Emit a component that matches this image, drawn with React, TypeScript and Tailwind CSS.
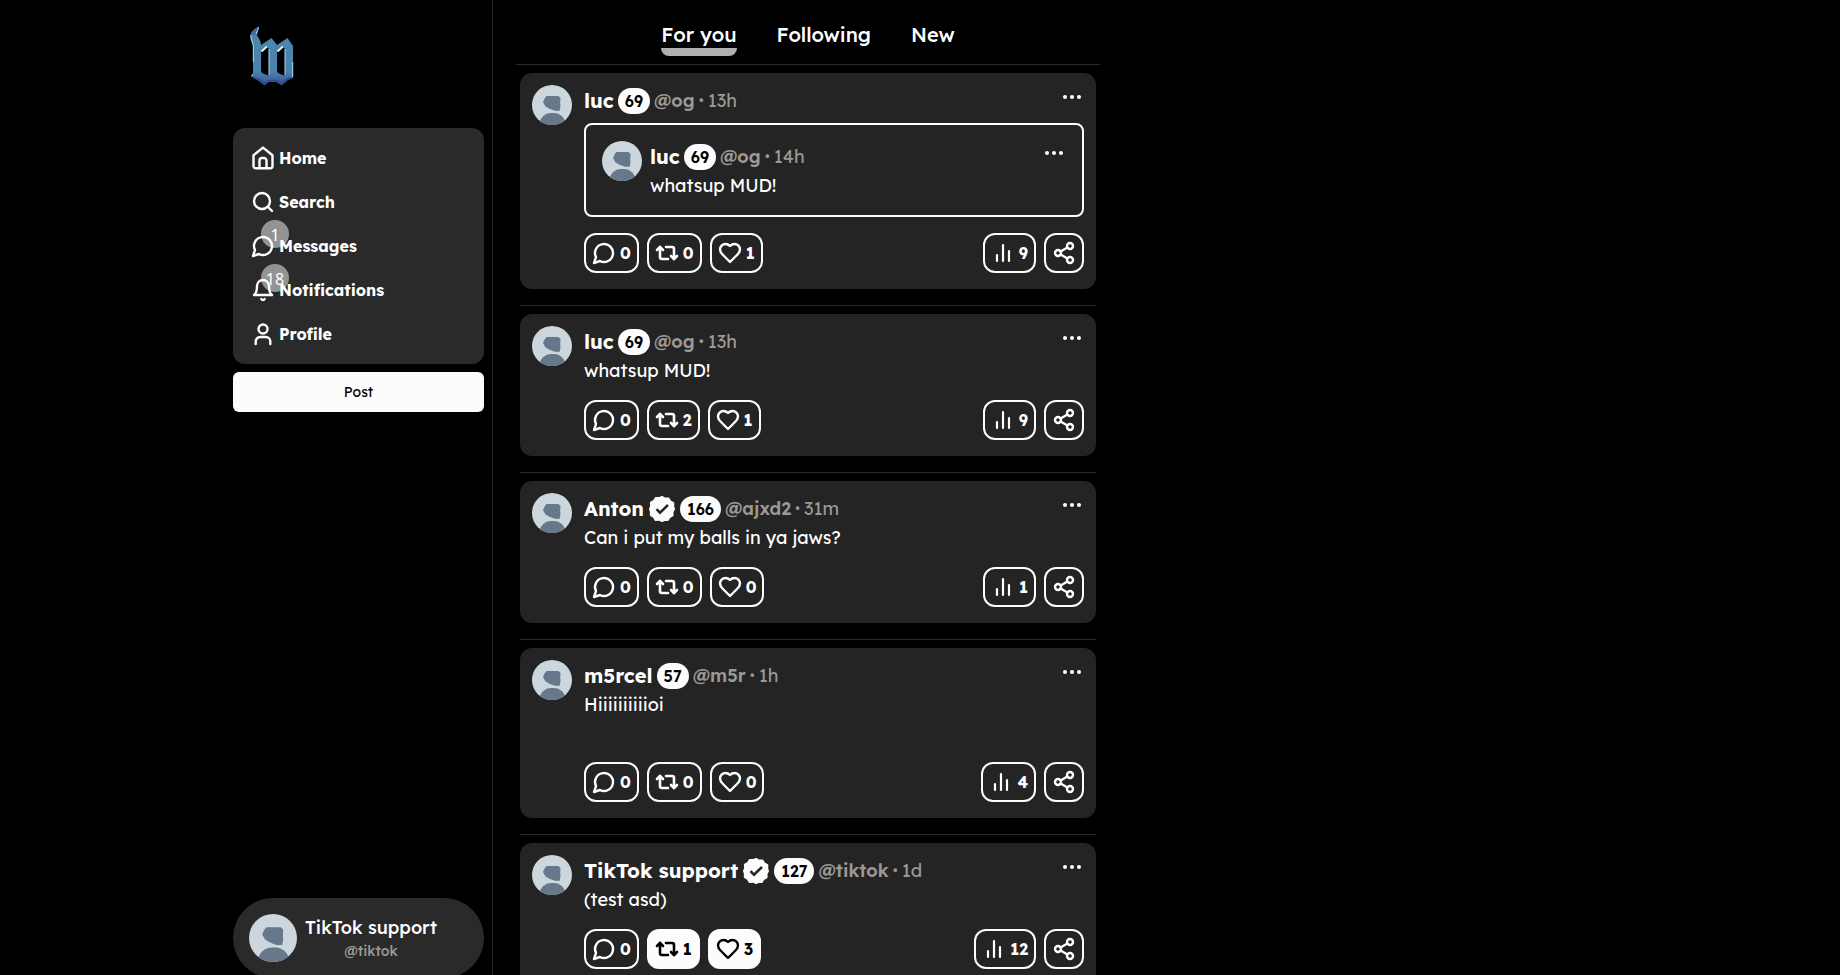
import React from 'react';
import { Search, Repeat2, Share2 } from 'lucide-react';

interface PostData {
  id: number;
  name: string;
  handle: string;
  level: number;
  age: string;
  text?: string;
  verified?: boolean;
  trailingLine?: boolean;
  quote?: PostData;
  comments?: number;
  reposts?: number;
  likes?: number;
  views?: number;
  reposted?: boolean;
  liked?: boolean;
}

const posts: PostData[] = [
  {
    id: 1, name: 'luc', handle: '@og', level: 69, age: '13h', comments: 0, reposts: 0, likes: 1, views: 9,
    quote: { id: 2, name: 'luc', handle: '@og', level: 69, age: '14h', text: 'whatsup MUD!' },
  },
  { id: 2, name: 'luc', handle: '@og', level: 69, age: '13h', text: 'whatsup MUD!', comments: 0, reposts: 2, likes: 1, views: 9 },
  { id: 3, name: 'Anton', handle: '@ajxd2', level: 166, age: '31m', verified: true, text: 'Can i put my balls in ya jaws?', comments: 0, reposts: 0, likes: 0, views: 1 },
  { id: 4, name: 'm5rcel', handle: '@m5r', level: 57, age: '1h', text: 'Hiiiiiiiiiioi', trailingLine: true, comments: 0, reposts: 0, likes: 0, views: 4 },
  { id: 5, name: 'TikTok support', handle: '@tiktok', level: 127, age: '1d', verified: true, text: '(test asd)', comments: 0, reposts: 1, likes: 3, views: 12, reposted: true, liked: true },
];

const Icon: React.FC<{ children: React.ReactNode; strokeWidth?: number }> = ({ children, strokeWidth = 2.4 }) => (
  <svg className="size-6 shrink-0" viewBox="0 0 24 24" fill="none" stroke="currentColor" strokeWidth={strokeWidth} strokeLinecap="round" strokeLinejoin="round" aria-hidden="true">
    {children}
  </svg>
);

const HomeIcon = () => (
  <Icon>
    <path d="M2.5 9.2 12 1.6l9.5 7.6V20a2.2 2.2 0 0 1-2.2 2.2H4.7A2.2 2.2 0 0 1 2.5 20Z" />
    <path d="M8.5 22v-7.5a2.5 2.5 0 0 1 2.500-2.500h2a2.500 2.500 0 0 1 2.500 2.500V22" />
  </Icon>
);

const CommentIcon = () => (
  <Icon>
    <path d="M7.9 20A9 9 0 1 0 4 16.100L2 22Z" />
  </Icon>
);

const BellIcon = () => (
  <Icon>
    <path d="M6 8a6 6 0 0 1 12 0c0 7 3 9 3 9H3s3-2 3-9" />
    <path d="M10.300 21a1.940 1.940 0 0 0 3.400 0" />
  </Icon>
);

const PersonIcon = () => (
  <Icon>
    <circle cx="12" cy="7" r="4.5" />
    <path d="M4.7 22v-2.500a4.500 4.500 0 0 1 4.500-4.500h5.600a4.500 4.500 0 0 1 4.500 4.500V22" />
  </Icon>
);

const HeartIcon = () => (
  <Icon>
    <path d="M19 14c1.490-1.460 3-3.210 3-5.500A5.500 5.500 0 0 0 16.500 3c-1.760 0-3 .5-4.500 2-1.500-1.500-2.740-2-4.500-2A5.500 5.500 0 0 0 2 8.500c0 2.300 1.500 4.050 3 5.500l7 7Z" />
  </Icon>
);

const ViewsIcon = () => (
  <Icon strokeWidth={2.2}>
    <path d="M6 20v-6M12 20V4M18 20V10" />
  </Icon>
);

const VerifiedIcon = () => (
  <svg className="mx-px size-[26px] shrink-0" viewBox="0 0 26 26" role="img" aria-label="Verified">
    <path
      fill="#fcfcfc"
      stroke="#fcfcfc"
      strokeWidth="2"
      strokeLinejoin="round"
      d="M13 1l3 1.600 3.500-.2 1.800 3 3 1.800-.1 3.400L25 13l-1.500 2.900.1 3.400-3 1.800-1.800 3-3.400-.1L13 25l-2.900-1.300-3.500.2-1.800-3-3-1.800.1-3.300L1 13l1.100-2.900-.2-3.400 3-1.800 1.800-3 3.400.2Z"
    />
    <path d="m7.500 13.200 3.500 3.500L19 9" fill="none" stroke="#242424" strokeWidth="2.500" />
  </svg>
);

const Logo = () => (
  <svg className="h-[60px] w-11" viewBox="0 0 44 60" role="img" aria-label="mud">
    <defs>
      <linearGradient id="steel" x1="0" y1="0" x2="0" y2="1">
        <stop offset="0" stopColor="#34528f" />
        <stop offset="0.18" stopColor="#4b85b0" />
        <stop offset="0.75" stopColor="#4b85ad" />
        <stop offset="0.88" stopColor="#3f6c9f" />
        <stop offset="1" stopColor="#34488a" />
      </linearGradient>
    </defs>
    <path
      fill="url(#steel)"
      fillRule="evenodd"
      d="M8.500 0.500C9 4 7 7 7 9C8 12 11 14 11 19L21.500 12L27 19L37.500 12L43 20V52L38 54L31.500 59.500L26 56H19L14.500 59.500L8 54.500L1 50.500L3 48V19C1 16 0 12 0.500 9.500C1 5 5 2 8.500 0.500ZM11 26V46L14 48L19 49.500V23L17 20.500ZM27 26V46L30 48L35 49.500V23L33 20.500Z"
    />
    <path d="M11.500 25.500L17 20.500M27.500 25.500L33 20.500" fill="none" stroke="#e6fbff" strokeWidth="1.800" />
    <path d="M8.300 1C8.500 4 6.500 5 6.500 8M.7 9C1 14 3.300 17 3.300 20V36M19 23V49M35 23V49M42.700 36V51M3 48L1.500 50" fill="none" stroke="#a5dcf5" strokeWidth="1" />
    <path d="M3 51.500L9 53.500L15 57.500L19.500 54.500H26L31.500 57.500L37.500 53L42 51.500" fill="none" stroke="#34468a" strokeWidth="1.500" />
  </svg>
);

const Avatar: React.FC<{ className: string }> = ({ className }) => (
  <svg className={`shrink-0 rounded-full ${className}`} viewBox="0 0 40 40" role="img" aria-label="Avatar">
    <rect width="40" height="40" fill="#ccd6dd" />
    <path d="M14.500 11h12l2 2-.3 5 .3 3-.8 4.800H23l-5-1.800-4.500-2.500-2.500-4.500 1.500-3.500Z" fill="#66788a" />
    <path d="M8 36c2-5 6-8 11-8h3c5 0 9 3 11 8l-4 4H12Z" fill="#66788a" />
  </svg>
);

const navItems = [
  { label: 'Home', icon: <HomeIcon /> },
  { label: 'Search', icon: <Search className="size-6" strokeWidth={2.4} /> },
  { label: 'Messages', icon: <CommentIcon />, count: 1 },
  { label: 'Notifications', icon: <BellIcon />, count: 18 },
  { label: 'Profile', icon: <PersonIcon /> },
];

const Sidebar = () => (
  <header className="flex h-screen w-[260px] shrink-0 flex-col border-r border-[#2a2a2a] pr-2">
    <a href="#" className="ml-[17px] mt-[26px] self-start">
      <Logo />
    </a>
    <nav className="mt-[42px] rounded-xl bg-[#2a2a2a] py-2">
      {navItems.map(item => (
        <a key={item.label} href="#" className="relative flex h-11 items-center gap-1 pl-[18px] font-bold text-white">
          {item.count && (
            <span className="absolute -top-1 left-7 flex size-7 items-center justify-center rounded-full bg-[#939393] pt-px font-['Noto_Sans',sans-serif] text-base font-normal">
              {item.count}
            </span>
          )}
          <span className="relative">{item.icon}</span>
          <span className="relative">{item.label}</span>
        </a>
      ))}
    </nav>
    <button type="button" className="mt-2 h-10 rounded-md bg-[#fcfcfc] text-sm font-normal text-black">Post</button>
    <a href="#" className="-mb-[3px] mt-auto flex h-20 items-center gap-2 rounded-full bg-[#2a2a2a] pl-4">
      <Avatar className="size-12" />
      <span className="flex flex-col items-center pt-0.5">
        <span className="text-lg font-medium leading-6 text-white">TikTok support</span>
        <span className="text-sm font-medium leading-[22px] text-[#9c9894]">@tiktok</span>
      </span>
    </a>
  </header>
);

const ActionButton: React.FC<{ label: string; icon: React.ReactNode; count?: number; active?: boolean }> = ({ label, icon, count, active }) => (
  <button
    type="button"
    aria-label={label}
    className={`flex h-10 items-center gap-1 rounded-xl border-2 border-[#fcfcfc] px-1.5 font-bold ${active ? 'bg-[#fcfcfc] text-black' : 'text-white'}`}
  >
    {icon}
    {count !== undefined && <span>{count}</span>}
  </button>
);

const Post: React.FC<{ post: PostData; quoted?: boolean }> = ({ post, quoted }) => (
  <article className={quoted ? 'flex gap-2 rounded-lg border-2 border-[#fcfcfc] p-4' : 'flex gap-3 rounded-xl bg-[#242424] px-3 pb-4 pt-3'}>
    <Avatar className="size-10" />
    <div className="min-w-0 flex-1">
      <div className="flex h-8 items-center gap-1">
        <span className="text-xl font-bold text-white">{post.name}</span>
        {post.verified && <VerifiedIcon />}
        <span className="flex h-[26px] items-center rounded-full bg-[#fcfcfc] px-[7px] text-base font-semibold text-black">{post.level}</span>
        <span className="flex gap-1 text-lg text-[#9c9894]">
          <span className="font-semibold">{post.handle}</span>
          <span className="font-black">·</span>
          <span>{post.age}</span>
        </span>
        <button type="button" aria-label="More" className="mb-2 ml-auto text-white">
          <svg className="h-6 w-6" viewBox="0 0 24 24" fill="currentColor" aria-hidden="true">
            <circle cx="5" cy="12" r="2" />
            <circle cx="12" cy="12" r="2" />
            <circle cx="19" cy="12" r="2" />
          </svg>
        </button>
      </div>
      {post.text && <p className="text-lg leading-[26px] text-white">{post.text}</p>}
      {post.trailingLine && <div className="h-7" />}
      {post.quote && (
        <div className="mt-1.5">
          <Post post={post.quote} quoted />
        </div>
      )}
      {!quoted && (
        <div className="mt-4 flex gap-2">
          <ActionButton label="Comment" icon={<CommentIcon />} count={post.comments} />
          <ActionButton label="Repost" icon={<Repeat2 className="size-6" strokeWidth={2.6} />} count={post.reposts} active={post.reposted} />
          <ActionButton label="Like" icon={<HeartIcon />} count={post.likes} active={post.liked} />
          <div className="ml-auto flex gap-2">
            <ActionButton label="Views" icon={<ViewsIcon />} count={post.views} />
            <ActionButton label="Share" icon={<Share2 className="size-6" strokeWidth={2.4} />} />
          </div>
        </div>
      )}
    </div>
  </article>
);

const App: React.FC = () => (
  <div className="h-screen overflow-hidden bg-black font-['Lexend','Inter',sans-serif]">
    <div className="mx-auto flex max-w-[1374px]">
      <Sidebar />
      <main className="ml-[23px] w-full max-w-[584px]">
        <nav className="flex h-[65px] justify-center gap-10 border-b border-[#2a2a2a] pt-[22px] text-xl font-medium leading-[26px] text-white">
          <a href="#" className="flex flex-col">
            <span>For you</span>
            <span className="h-2 rounded-b-lg bg-[#b0b0b0]" />
          </a>
          <a href="#">Following</a>
          <a href="#">New</a>
        </nav>
        <div className="px-1 pt-2">
          {posts.map(post => (
            <div key={post.id} className="mb-2 border-b border-[#2a2a2a] pb-4">
              <Post post={post} />
            </div>
          ))}
        </div>
      </main>
    </div>
  </div>
);

export default App;
